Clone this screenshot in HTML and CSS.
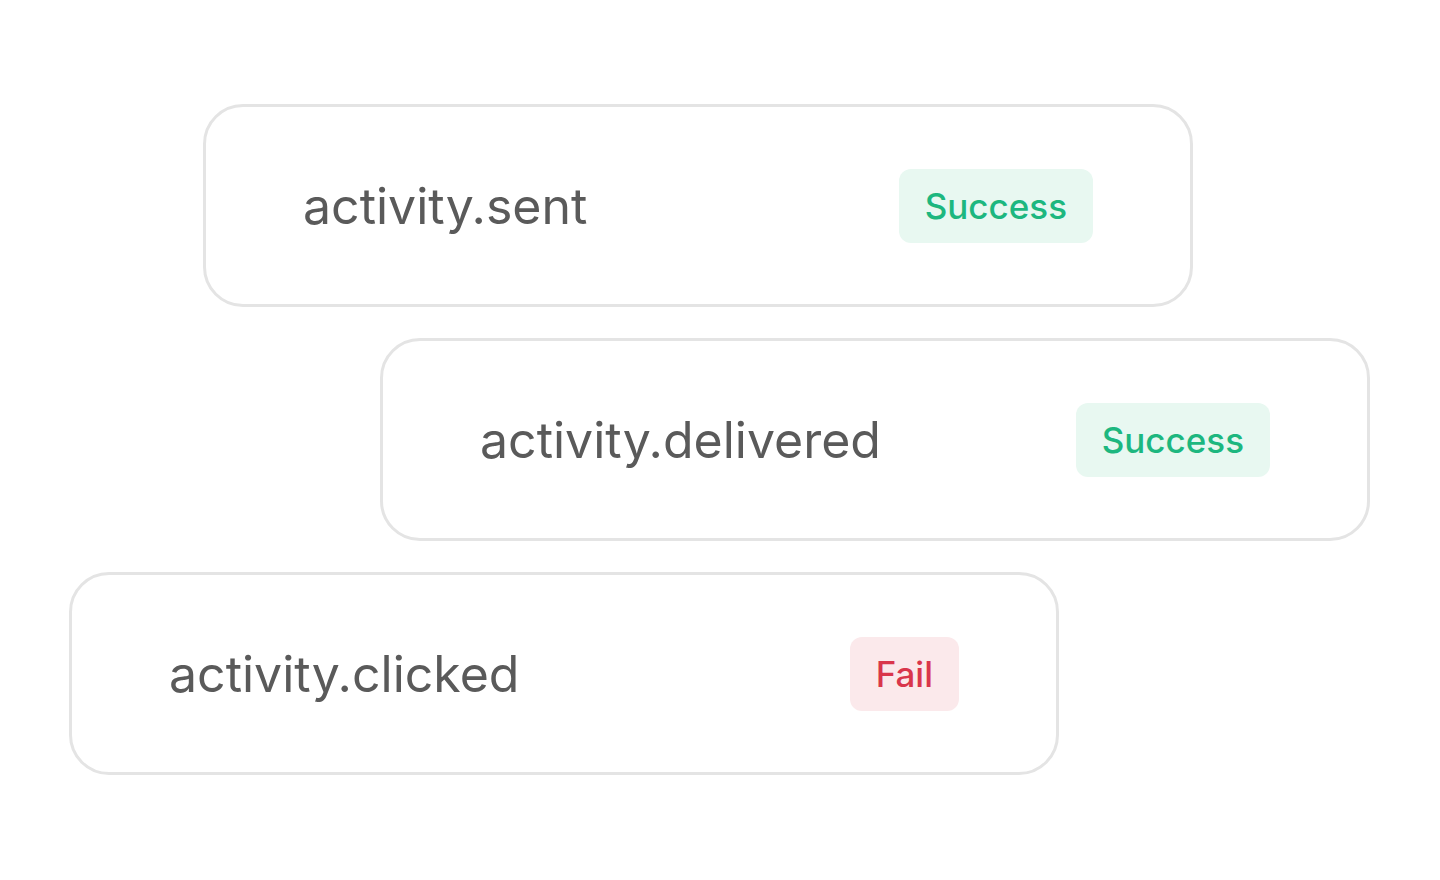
FILE: index.html
```html
<!DOCTYPE html>
<html lang="en">
<head>
    <meta charset="UTF-8">
    <meta name="viewport" content="width=device-width, initial-scale=1.0">
    <title>Activity Events</title>
    <link rel="stylesheet" href="styles.css">
</head>
<body>
    <div class="events">
        <!-- Sent -->
        <div class="event event-sent">
            <span class="event-name">activity.sent</span>
            <span class="badge badge-success">Success</span>
        </div>

        <!-- Delivered -->
        <div class="event event-delivered">
            <span class="event-name">activity.delivered</span>
            <span class="badge badge-success">Success</span>
        </div>

        <!-- Clicked -->
        <div class="event event-clicked">
            <span class="event-name">activity.clicked</span>
            <span class="badge badge-fail">Fail</span>
        </div>
    </div>
</body>
</html>
```

FILE: styles.css
```css
* {
    margin: 0;
    padding: 0;
    box-sizing: border-box;
}

body, html {
    height: 100%;
    overflow: hidden;
    background-color: #ffffff;
    font-family: Inter, "Noto Sans", sans-serif;
}

.events {
    display: flex;
    flex-direction: column;
    gap: 31px;
    padding-top: 104px;
}

.event {
    width: 990px;
    height: 203px;
    border: 3px solid #e4e4e4;
    border-radius: 40px;
    display: flex;
    align-items: center;
    justify-content: space-between;
    padding: 0 97px;
    background-color: #ffffff;
}

.event-sent {
    margin-left: 203px;
}

.event-delivered {
    margin-left: 380px;
}

.event-clicked {
    margin-left: 69px;
}

.event-name {
    font-size: 50px;
    color: #5a5a5a;
    line-height: 1;
}

.badge {
    height: 74px;
    line-height: 74px;
    padding: 0 26px;
    border-radius: 12px;
    font-size: 35px;
    font-weight: 500;
}

.badge-success {
    background-color: #e8f8f1;
    color: #1db77f;
}

.badge-fail {
    background-color: #fbe9eb;
    color: #d9364b;
}
```
